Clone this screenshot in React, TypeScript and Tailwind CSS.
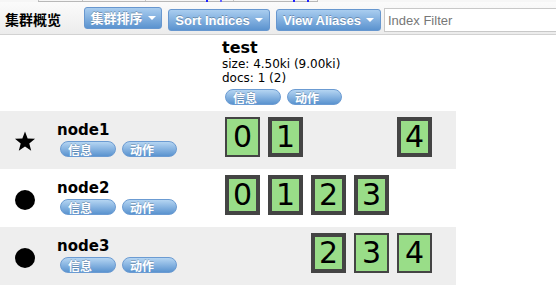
import React from 'react';

type Shard = { n: number; primary: boolean } | null;

interface NodeRow {
  name: string;
  master?: boolean;
  shaded?: boolean;
  shards: Shard[];
}

const NODES: NodeRow[] = [
  {
    name: 'node1',
    master: true,
    shaded: true,
    shards: [{ n: 0, primary: false }, { n: 1, primary: true }, null, null, { n: 4, primary: true }],
  },
  {
    name: 'node2',
    shards: [{ n: 0, primary: true }, { n: 1, primary: true }, { n: 2, primary: true }, { n: 3, primary: true }, null],
  },
  {
    name: 'node3',
    shaded: true,
    shards: [null, null, { n: 2, primary: true }, { n: 3, primary: false }, { n: 4, primary: false }],
  },
];

const Caret = () => (
  <span className="w-0 h-0 border-x-[4px] border-x-transparent border-t-[4px] border-t-white shrink-0" />
);

const ToolButton = ({ label, width, top }: { label: string; width: string; top: string }) => (
  <button
    className={`${width} ${top} h-[22px] shrink-0 whitespace-nowrap flex items-center justify-center gap-[5px] rounded-[3px] border border-[#6797cf] bg-linear-to-b from-[#a9cdef] to-[#5b93cf] text-white font-bold text-[13px] leading-none [text-shadow:0_-1px_0_rgba(0,0,0,0.25)] font-['Liberation_Sans','Noto_Sans_CJK_SC',sans-serif]`}
  >
    <span>{label}</span>
    <Caret />
  </button>
);

const Pill = ({ label, width }: { label: string; width: string }) => (
  <div
    className={`${width} h-[16px] box-border shrink-0 flex items-start justify-between pl-[7px] pr-[8px] rounded-full border border-[#6b9bd2] bg-linear-to-b from-[#b5d5f2] to-[#5a93cf] overflow-hidden text-white font-bold text-[12px] whitespace-nowrap [text-shadow:0_-1px_0_rgba(0,0,0,0.2)] font-['Noto_Sans_CJK_SC',sans-serif]`}
  >
    <span className="leading-[12px] mt-[2px]">{label}</span>
    <span className="self-center mt-[1px]">
      <Caret />
    </span>
  </div>
);

const Pills = () => (
  <div className="flex gap-[6px]">
    <Pill label="信息" width="w-[56px]" />
    <Pill label="动作" width="w-[55px]" />
  </div>
);

const ShardBox = ({ shard }: { shard: Shard }) => {
  if (!shard) return <div className="w-[35px] h-[40px]" />;
  return (
    <div
      className={`w-[35px] h-[40px] box-border flex items-center justify-center bg-[#99dd88] border-[#444444] ${shard.primary ? 'border-[4px]' : 'border-2'} text-[30px] leading-none text-black font-['DejaVu_Sans',sans-serif]`}
    >
      {shard.n}
    </div>
  );
};

const Star = () => (
  <svg width="22" height="21" viewBox="0 0 24 23">
    <path d="M12 0.5l2.9 7.6 8.1.4-6.3 5.1 2.1 7.9L12 17l-6.8 4.5 2.1-7.9L1 8.5l8.1-.4z" fill="#000" />
  </svg>
);

const Dot = () => <div className="w-[20px] h-[20px] rounded-full bg-black" />;

export default function App() {
  return (
    <div className="w-[556px] h-[298px] overflow-hidden bg-white font-['DejaVu_Sans',sans-serif] text-black">
      {/* remains of tab bar above */}
      <div className="h-[2px] flex bg-[#f6f6f6]">
        <div className="ml-[38px] w-[280px] h-[2px] flex border-b border-[#b8b8b8]">
          <div className="w-[44px] border-l border-[#c4c4c4]" />
          <div className="w-[63px] border-l border-[#c4c4c4]" />
          <div className="w-[88px] border-l border-[#c4c4c4] flex">
            <span className="ml-[60px] w-[2px] h-[2px] bg-[#2222ff]" />
            <span className="ml-[12px] w-[2px] h-[2px] bg-[#6666ff]" />
          </div>
          <div className="w-[85px] border-l border-[#c4c4c4] border-r flex">
            <span className="ml-[59px] w-[2px] h-[2px] bg-[#2222ff]" />
            <span className="ml-[12px] w-[2px] h-[2px] bg-[#2222ff]" />
          </div>
        </div>
      </div>

      {/* toolbar */}
      <div className="h-[33px] flex items-start bg-linear-to-b from-[#fbfbfb] to-[#ececec] border-b border-[#d2d2d2]">
        <div className="ml-[5px] mt-[7px] w-[56px] shrink-0 whitespace-nowrap text-[14px] leading-[20px] font-bold font-['Noto_Sans_CJK_SC',sans-serif]">
          集群概览
        </div>
        <div className="ml-[23px] flex gap-[6px] shrink-0">
          <ToolButton label="集群排序" width="w-[78px]" top="mt-[5px]" />
          <ToolButton label="Sort Indices" width="w-[102px]" top="mt-[7px]" />
          <ToolButton label="View Aliases" width="w-[105px]" top="mt-[7px]" />
        </div>
        <input
          placeholder="Index Filter"
          className="ml-[3px] mt-[6px] w-[200px] h-[24px] shrink-0 px-[3px] border border-[#c8c8c8] bg-white text-[13px] placeholder:text-[#777] outline-none font-['Liberation_Sans',sans-serif]"
        />
      </div>

      {/* overview table */}
      <div className="w-[456px]">
        <div className="h-[76px] flex">
          <div className="w-[218px] shrink-0" />
          <div className="pt-[4px] pl-[4px]">
            <div className="text-[16px] leading-[18px] font-bold">test</div>
            <div className="text-[12px] leading-[14px] whitespace-nowrap">size: 4.50ki (9.00ki)</div>
            <div className="text-[12px] leading-[14px]">docs: 1 (2)</div>
            <div className="mt-[4px] ml-[3px]">
              <Pills />
            </div>
          </div>
        </div>

        {NODES.map((node) => (
          <div key={node.name} className={`h-[58px] flex ${node.shaded ? 'bg-[#eeeeee]' : 'bg-white'}`}>
            <div className="w-[50px] shrink-0 flex items-center justify-center pt-[3px]">
              {node.master ? <Star /> : <Dot />}
            </div>
            <div className="w-[168px] shrink-0 pl-[7px] pt-[10px]">
              <div className="text-[15px] leading-[18px] font-bold">{node.name}</div>
              <div className="mt-[2px] ml-[3px]">
                <Pills />
              </div>
            </div>
            <div className="pl-[7px] pt-[6px] flex gap-[8px]">
              {node.shards.map((s, i) => (
                <ShardBox key={i} shard={s} />
              ))}
            </div>
          </div>
        ))}
      </div>
    </div>
  );
}
